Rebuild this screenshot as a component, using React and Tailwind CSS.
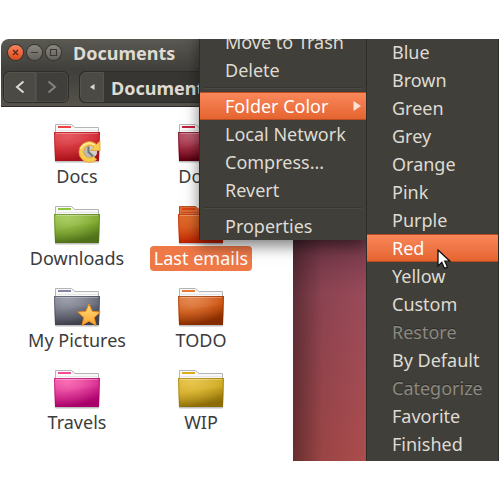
import React from 'react';

const FOLDERS = [
  { name: 'Docs', light: '#ea6068', mid: '#cb2028', dark: '#a8121a', stripe: '#ee4444', emblem: 'recent' },
  { name: 'Done', light: '#c4687c', mid: '#8e0f26', dark: '#5a0010', stripe: '#c4203c' },
  { name: 'Downloads', light: '#b2d46c', mid: '#74a024', dark: '#50701a', stripe: '#8ec63e' },
  { name: 'Last emails', light: '#e07030', mid: '#d44a12', dark: '#bc2000', stripe: '#dc4410', selected: true },
  { name: 'My Pictures', light: '#a4a6b4', mid: '#5e606e', dark: '#3e404c', stripe: '#8286a2', emblem: 'star' },
  { name: 'TODO', light: '#e8915c', mid: '#c84c08', dark: '#842c00', stripe: '#e87c34' },
  { name: 'Travels', light: '#ff78b8', mid: '#d0208a', dark: '#a80068', stripe: '#f84898' },
  { name: 'WIP', light: '#ecca54', mid: '#c8a41c', dark: '#8c6c08', stripe: '#dcac1c' },
];

const FILE_MENU = [
  { label: 'Move to Trash' },
  { label: 'Delete' },
  { separator: true },
  { label: 'Folder Color', active: true, submenu: true },
  { label: 'Local Network' },
  { label: 'Compress...' },
  { label: 'Revert' },
  { separator: true },
  { label: 'Properties' },
];

const COLOR_MENU = [
  { label: 'Blue' },
  { label: 'Brown' },
  { label: 'Green' },
  { label: 'Grey' },
  { label: 'Orange' },
  { label: 'Pink' },
  { label: 'Purple' },
  { label: 'Red', active: true, pointer: true },
  { label: 'Yellow' },
  { label: 'Custom' },
  { label: 'Restore', disabled: true },
  { label: 'By Default' },
  { label: 'Categorize', disabled: true },
  { label: 'Favorite' },
  { label: 'Finished' },
];

function RecentEmblem() {
  return (
    <g>
      <circle cx="36.500" cy="28.500" r="7.500" fill="#b9bbb9" />
      <path d="M36.500 28.500V21a7.500 7.500 0 0 1 6 12z" fill="#cfd1cf" />
      <path d="M35.500 23.500v5.500l4.500 4.500" fill="none" stroke="#747674" strokeWidth="2" />
      <path
        d="M43.500 21.200L47 18V27.500H37.500L41 24A6.200 6.200 0 1 0 40.500 33.700L43.800 36.500A10.500 10.500 0 1 1 43.500 21.200z"
        fill="#f9cc50"
        stroke="#dea030"
        strokeWidth=".8"
        strokeLinejoin="round"
      />
      <path d="M27.500 26a9.500 9.500 0 0 1 14-4" fill="none" stroke="#ffeaa4" strokeWidth="1.500" />
    </g>
  );
}

function StarEmblem() {
  return (
    <g>
      <path
        d="M36 17l3.200 7.300 8 .8-6 5.300 1.800 7.900-7-4.100-7 4.100 1.800-7.900-6-5.300 8-.8z"
        fill="url(#star-fill)"
        stroke="#e88c1c"
        strokeWidth="1"
        strokeLinejoin="round"
      />
    </g>
  );
}

function FolderIcon({ folder }) {
  const id = folder.name.replace(/\s/g, '-');
  const rim = folder.selected ? '#b8501c' : '#b4b4b4';
  const paper = folder.selected ? '#dc6c38' : '#f8f8f8';
  return (
    <svg width="48" height="41" viewBox="0 0 48 41" aria-hidden="true">
      <defs>
        <linearGradient id={`${id}-body`} x1="0" y1="0" x2=".3" y2="1">
          <stop offset="0" stopColor={folder.mid} />
          <stop offset=".5" stopColor={folder.mid} />
          <stop offset="1" stopColor={folder.dark} />
        </linearGradient>
        <radialGradient id={`${id}-glow`} cx=".28" cy=".15" r=".8">
          <stop offset="0" stopColor={folder.light} />
          <stop offset="1" stopColor={folder.light} stopOpacity="0" />
        </radialGradient>
        <linearGradient id="star-fill" x1="0" y1="0" x2="0" y2="1">
          <stop offset="0" stopColor="#ffe07c" />
          <stop offset="1" stopColor="#fba430" />
        </linearGradient>
      </defs>
      <rect x="2" y="37" width="44" height="2.500" rx="1" fill="#000" opacity=".25" />
      <path d="M2.500 12V1.500H18.500L22 4.500H45.500V12z" fill={paper} stroke={rim} />
      <path d="M4 7.500H45" stroke={folder.selected ? '#c85020' : '#e6e6e6'} />
      <rect x="5" y="3" width="13" height="2" fill={folder.stripe} />
      <path d="M1 9H47L46 38H2z" fill={`url(#${id}-body)`} />
      <path d="M1 9H47L46 38H2z" fill={`url(#${id}-glow)`} opacity=".7" />
      <path d="M1 9H47L46.600 18Q24 19 2 26z" fill={`url(#${id}-glow)`} opacity=".6" />
      <path d="M1.500 9.500H46.500L45.500 37.500H2.500z" fill="none" stroke={folder.dark} strokeOpacity=".5" />
      <path d="M3 10.500H45" stroke="#fff" strokeOpacity=".3" />
      {folder.emblem === 'recent' && <RecentEmblem />}
      {folder.emblem === 'star' && <StarEmblem />}
    </svg>
  );
}

function Folder({ folder }) {
  return (
    <button type="button" className="flex flex-col items-center">
      <FolderIcon folder={folder} />
      <span
        className={
          folder.selected
            ? 'rounded bg-[#ef7847] px-1 leading-[25px] whitespace-nowrap text-white'
            : 'px-1 leading-[25px] whitespace-nowrap text-[#3c3c3c]'
        }
      >
        {folder.name}
      </span>
    </button>
  );
}

function WindowButton({ label, close, children }) {
  return (
    <button
      type="button"
      aria-label={label}
      className={
        close
          ? 'size-[15px] rounded-full bg-linear-to-b from-[#f58560] to-[#dd4814] text-[#5c2410] ring-1 ring-[#35342f]'
          : 'size-[15px] rounded-full bg-linear-to-b from-[#8a8880] to-[#64625b] text-[#3a3935] ring-1 ring-[#35342f]'
      }
    >
      <svg viewBox="0 0 15 15" fill="none" stroke="currentColor" strokeWidth="1.200" aria-hidden="true">
        {children}
      </svg>
    </button>
  );
}

function FileWindow() {
  return (
    <section className="ml-px flex min-w-0 flex-1 flex-col overflow-hidden rounded-tl-lg bg-white">
      <header className="flex h-[31px] shrink-0 items-center gap-1 bg-linear-to-b from-[#5b5952] to-[#403f3b] pb-1 pl-[7px]">
        <WindowButton label="Close" close>
          <path d="M5 5l5 5M10 5l-5 5" />
        </WindowButton>
        <WindowButton label="Minimize">
          <path d="M4 7.500h7" />
        </WindowButton>
        <WindowButton label="Maximize">
          <path d="M4.500 4.500h6v6h-6z" />
        </WindowButton>
        <h1 className="ml-2 text-lg leading-7 font-bold text-[#dfdbd2]">Documents</h1>
      </header>
      <nav className="flex h-[37px] shrink-0 items-start gap-2.5 border-b border-[#2c2b28] bg-linear-to-b from-[#403f3b] to-[#55534b] pl-0.5">
        <div className="mt-px flex h-8 w-[66px] shrink-0 overflow-hidden rounded-md border border-[#2d2c29]">
          <button type="button" aria-label="Back" className="flex flex-1 items-center justify-center rounded-l-md border border-[#55544d] bg-[#4b4a45] text-[#dfdbd2]">
            <svg width="10" height="14" viewBox="0 0 10 14" fill="none" stroke="currentColor" strokeWidth="2" aria-hidden="true">
              <path d="M8.500 1.500L2 7l6.500 5.500" />
            </svg>
          </button>
          <button type="button" aria-label="Forward" className="flex flex-1 items-center justify-center rounded-r-md border border-[#4b4a44] bg-[#403f3b] text-[#85837b]">
            <svg width="10" height="14" viewBox="0 0 10 14" fill="none" stroke="currentColor" strokeWidth="2" aria-hidden="true">
              <path d="M1.500 1.500L8 7l-6.500 5.500" />
            </svg>
          </button>
        </div>
        <div className="mt-px flex h-8 min-w-0 flex-1 overflow-hidden rounded-l-md border border-[#2d2c29] bg-[#373632]">
          <button type="button" aria-label="Parent folders" className="flex w-6 shrink-0 items-center justify-center rounded-l-md border border-[#55544d] bg-[#4b4a45] text-[#dfdbd2]">
            <svg width="5" height="6" viewBox="0 0 5 6" fill="currentColor" aria-hidden="true">
              <path d="M4.500 0v6L0 3z" />
            </svg>
          </button>
          <button type="button" className="pt-px pl-[7px] text-lg font-bold text-[#dfdbd2]">Documents</button>
        </div>
      </nav>
      <div className="grid grid-cols-2 gap-y-4 pt-4 pr-[30px] pl-3.5">
        {FOLDERS.map((folder) => (
          <Folder key={folder.name} folder={folder} />
        ))}
      </div>
    </section>
  );
}

function Pointer() {
  return (
    <svg className="absolute top-[15px] left-[70px] z-10" width="14" height="21" viewBox="0 0 14 21" aria-hidden="true">
      <path d="M1 1v16l3.800-3.600 2.700 6 3-1.300-2.700-5.900H13z" fill="#fff" stroke="#111" strokeWidth="1.300" />
    </svg>
  );
}

function MenuItem({ item }) {
  if (item.separator) {
    return (
      <li role="separator" className="flex h-2 items-center px-1">
        <span className="h-0.5 flex-1 border-t border-b border-t-[#383732] border-b-[#4a4943]" />
      </li>
    );
  }
  let tone = 'border-transparent text-[#dfdbd2]';
  if (item.active) tone = 'border-[#b84c20] bg-linear-to-b from-[#fa875a] to-[#e4642f] text-white';
  if (item.disabled) tone = 'border-transparent text-[#8b897f] text-shadow-[0_-1px_0_#2b2a27]';
  return (
    <li role="none" className="relative">
      <button
        type="button"
        role="menuitem"
        disabled={item.disabled}
        className={`flex h-7 w-full items-center justify-between border-y pr-[5px] pl-[25px] text-lg leading-[26px] whitespace-nowrap ${tone}`}
      >
        {item.label}
        {item.submenu && (
          <svg width="8" height="10" viewBox="0 0 8 10" aria-hidden="true">
            <path d="M0.500 0v10L8 5z" fill="#fbe0d4" />
          </svg>
        )}
      </button>
      {item.pointer && <Pointer />}
    </li>
  );
}

export default function App() {
  return (
    <div className="min-h-screen bg-white py-[39px] font-['Noto_Sans',sans-serif] text-lg">
      <main className="relative mr-px flex overflow-hidden">
        <FileWindow />
        <div className="w-[73px] shrink-0 bg-linear-to-b from-[#6c3547] from-45% via-[#9a4a5a] via-60% to-[#ac4c4c]">
          <div className="h-full bg-linear-to-r from-black/40 via-black/10 via-40% to-transparent" />
        </div>
        <ul
          role="menu"
          aria-label="File actions"
          className="absolute -top-[11px] right-[133px] w-[167px] border-l border-[#2d2c29] bg-[#403f3a] shadow-[0_6px_14px_rgba(0,0,0,0.5)]"
        >
          {FILE_MENU.map((item, i) => (
            <MenuItem key={i} item={item} />
          ))}
        </ul>
        <ul
          role="menu"
          aria-label="Folder color"
          className="relative -mt-px w-[133px] shrink-0 border-x border-[#2d2c29] bg-[#403f3a] pb-[3px]"
        >
          {COLOR_MENU.map((item) => (
            <MenuItem key={item.label} item={item} />
          ))}
        </ul>
      </main>
    </div>
  );
}
